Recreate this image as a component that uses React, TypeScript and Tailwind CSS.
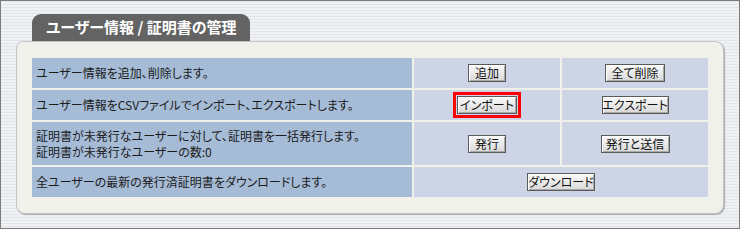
import React from "react";

function Btn({ label, w, focus }: { label: string; w: string; focus?: boolean }) {
  const btn = (
    <button
      className={`${w} h-[18px] px-0 whitespace-nowrap border border-[#5a5a5a] bg-gradient-to-b from-[#fafafa] to-[#d9d9d9] shadow-[inset_1px_1px_0_#ffffff,inset_-1px_-1px_0_#a8a8a8] text-[12px] leading-[16px] text-[#111] [font-feature-settings:'palt'] flex items-center justify-center`}
    >
      {label}
    </button>
  );
  if (focus) {
    return <div className="border-[3px] border-[#ff0000] p-px flex">{btn}</div>;
  }
  return btn;
}

export default function App() {
  const font = "font-['Noto_Sans_CJK_JP','Noto_Sans',sans-serif]";
  return (
    <div
      className={`w-[740px] h-[229px] box-border border border-[#7c7c7c] bg-[repeating-linear-gradient(180deg,#e2e5ea_0px,#e2e5ea_1px,#eff1f4_1px,#eff1f4_3px)] ${font} overflow-hidden`}
    >
      <div className="ml-[31px] mt-[13px] w-[218px] h-[27px] rounded-t-[9px] bg-[#636363] pl-[14px] flex items-center text-white font-bold text-[15px] [font-feature-settings:'palt']">
        ユーザー情報 / 証明書の管理
      </div>
      <div className="ml-[15px] w-[708px] h-[173px] box-border rounded-[9px] rounded-tl-[7px] border border-[#c4c4c4] bg-[#f1f1ec] shadow-[1px_1px_1px_#a9a9a9] pl-[15px] pt-[16px]">
        <div className="grid grid-cols-[380px_146px_146px] grid-rows-[30px_30px_43px_30px] gap-[2px] text-[12px] text-[#1c1c1c] [font-feature-settings:'palt']">
          <div className="bg-[#a5bbd6] flex items-center pl-[4px] whitespace-nowrap">ユーザー情報を追加、削除します。</div>
          <div className="bg-[#ccd4e6] flex items-center justify-center">
            <Btn label="追加" w="w-[38px]" />
          </div>
          <div className="bg-[#ccd4e6] flex items-center justify-center">
            <Btn label="全て削除" w="w-[60px]" />
          </div>

          <div className="bg-[#a5bbd6] flex items-center pl-[4px] whitespace-nowrap">ユーザー情報をCSVファイルでインポート、エクスポートします。</div>
          <div className="bg-[#ccd4e6] flex items-center justify-center">
            <Btn label="インポート" w="w-[60px]" focus />
          </div>
          <div className="bg-[#ccd4e6] flex items-center justify-center">
            <Btn label="エクスポート" w="w-[67px]" />
          </div>

          <div className="bg-[#a5bbd6] flex flex-col justify-center pl-[4px] leading-[16px] whitespace-nowrap">
            <div>証明書が未発行なユーザーに対して、証明書を一括発行します。</div>
            <div>証明書が未発行なユーザーの数:0</div>
          </div>
          <div className="bg-[#ccd4e6] flex items-center justify-center">
            <Btn label="発行" w="w-[38px]" />
          </div>
          <div className="bg-[#ccd4e6] flex items-center justify-center">
            <Btn label="発行と送信" w="w-[69px]" />
          </div>

          <div className="bg-[#a5bbd6] flex items-center pl-[4px] whitespace-nowrap">全ユーザーの最新の発行済証明書をダウンロードします。</div>
          <div className="col-span-2 bg-[#ccd4e6] flex items-center justify-center">
            <Btn label="ダウンロード" w="w-[68px]" />
          </div>
        </div>
      </div>
    </div>
  );
}
